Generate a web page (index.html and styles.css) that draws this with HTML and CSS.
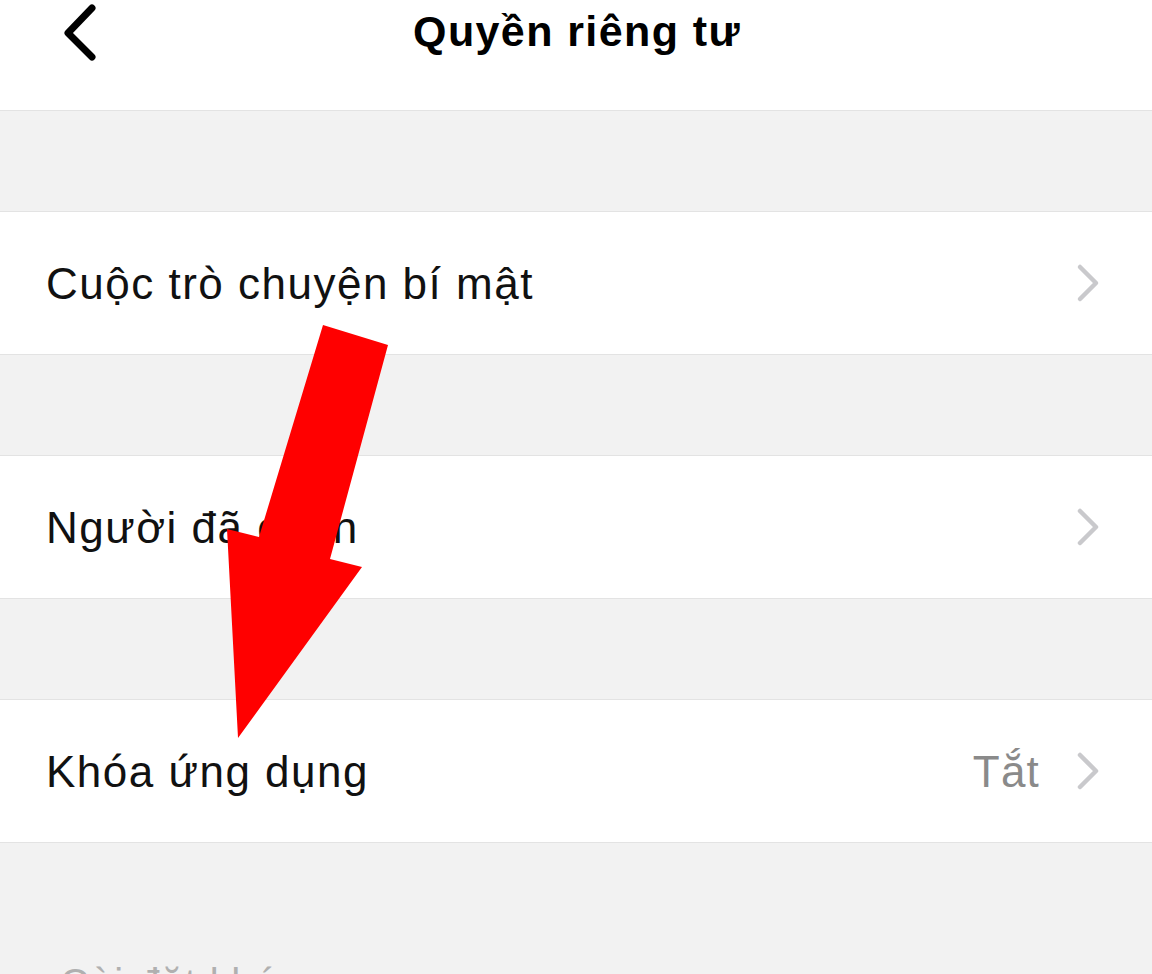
FILE: index.html
```html
<!DOCTYPE html>
<html lang="vi">
<head>
    <meta charset="UTF-8">
    <meta name="viewport" content="width=device-width, initial-scale=1.0">
    <title>Quyền riêng tư</title>
    <link rel="stylesheet" href="styles.css">
</head>
<body>
    <div class="screen">
        <div class="header">
            <svg class="back" width="44" height="66" viewBox="0 0 44 66">
                <polyline points="36,8 12,33 36,57" fill="none" stroke="#000" stroke-width="7" stroke-linecap="round" stroke-linejoin="round"/>
            </svg>
            <h1>Quyền riêng tư</h1>
        </div>

        <div class="gap"></div>
        <div class="row">
            <span class="label">Cuộc trò chuyện bí mật</span>
            <svg class="chev" width="30" height="44" viewBox="0 0 30 44">
                <polyline points="8,6 24,22 8,38" fill="none" stroke="#c9c9cc" stroke-width="4.5" stroke-linecap="round" stroke-linejoin="round"/>
            </svg>
        </div>

        <div class="gap"></div>
        <div class="row">
            <span class="label">Người đã chặn</span>
            <svg class="chev" width="30" height="44" viewBox="0 0 30 44">
                <polyline points="8,6 24,22 8,38" fill="none" stroke="#c9c9cc" stroke-width="4.5" stroke-linecap="round" stroke-linejoin="round"/>
            </svg>
        </div>

        <div class="gap"></div>
        <div class="row">
            <span class="label">Khóa ứng dụng</span>
            <span class="value">Tắt</span>
            <svg class="chev" width="30" height="44" viewBox="0 0 30 44">
                <polyline points="8,6 24,22 8,38" fill="none" stroke="#c9c9cc" stroke-width="4.5" stroke-linecap="round" stroke-linejoin="round"/>
            </svg>
        </div>

        <div class="footer">
            <span class="caption">Cài đặt khác</span>
        </div>

        <!-- red arrow drawn over the list -->
        <svg class="arrow" width="1152" height="974" viewBox="0 0 1152 974">
            <polygon points="323,325 388,345 330,559 362,567 238,738 227,529 259,537" fill="#ff0000"/>
        </svg>
    </div>
</body>
</html>
```

FILE: styles.css
```css
body {
    margin: 0;
    font-family: "Liberation Sans", Arial, sans-serif;
    background-color: #f2f2f2;
}

.screen {
    position: relative;
    width: 1152px;
    height: 974px;
    overflow: hidden;
    background-color: #f2f2f2;
}

.header {
    height: 110px;
    background: #fff;
    border-bottom: 1px solid #e3e3e3;
    display: flex;
    justify-content: center;
    align-items: flex-start;
    position: relative;
}

.back {
    position: absolute;
    left: 56px;
    top: 0;
}

h1 {
    margin: 0;
    padding-top: 7px;
    padding-left: 2px;
    font-size: 43px;
    font-weight: bold;
    color: #000;
    letter-spacing: 1.4px;
}

.gap {
    height: 100px;
}

.row {
    height: 142px;
    background: #fff;
    border-top: 1px solid #e3e3e3;
    border-bottom: 1px solid #e3e3e3;
    display: flex;
    align-items: center;
    padding: 0 50px 0 46px;
}

.label {
    flex: 1;
    font-size: 44px;
    color: #111;
    letter-spacing: 1.5px;
    padding-top: 2px;
}

.value {
    font-size: 44px;
    color: #8a8a8a;
    letter-spacing: 1.2px;
    margin-right: 32px;
    padding-top: 2px;
}

.footer {
    height: 128px;
    position: relative;
}

.caption {
    position: absolute;
    left: 60px;
    top: 118px;
    font-size: 40px;
    color: #b0b0b0;
    letter-spacing: 1.5px;
}

.arrow {
    position: absolute;
    left: 0;
    top: 0;
}
```
